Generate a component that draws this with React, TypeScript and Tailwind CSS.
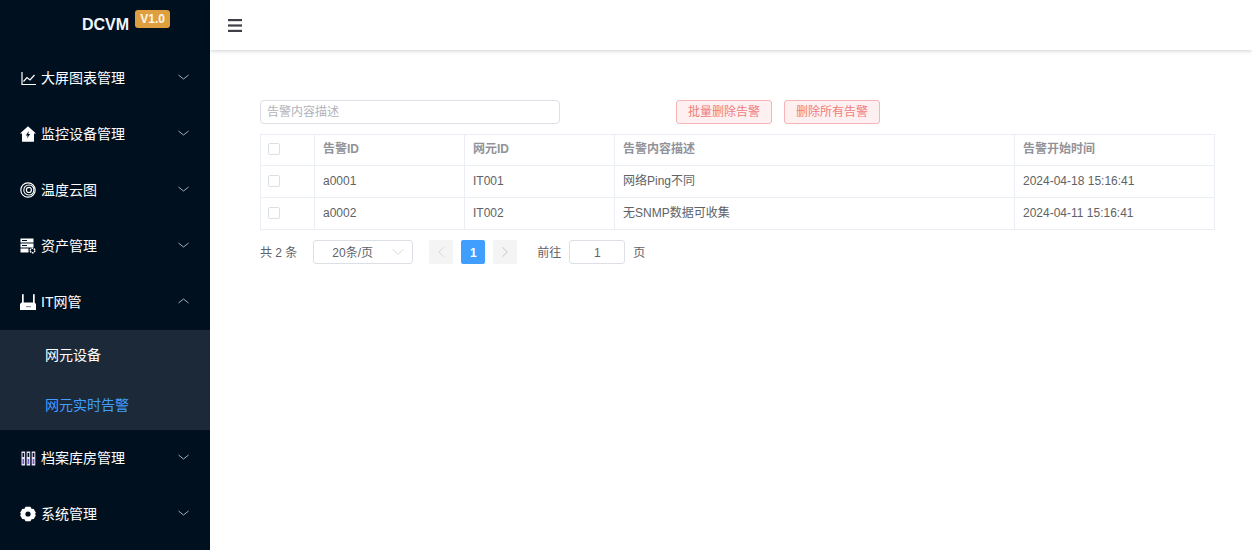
import { ChevronDown, ChevronLeft, ChevronRight } from "lucide-react";
import type { ReactNode } from "react";

const FONT = "font-['Liberation_Sans','Noto_Sans_CJK_SC',sans-serif]";

const ChartIcon = () => (
  <svg width="15" height="15" viewBox="0 0 15 15" fill="none" stroke="#fff" strokeWidth="1.2">
    <path d="M1 1v12.5h14" />
    <path d="M2.5 10.5 6 6.5l3 2.5 4.5-5" />
  </svg>
);

const HomeIcon = () => (
  <svg width="16" height="16" viewBox="0 0 16 16">
    <path d="M8 0.2 16 7.5h-2V15.8H2V7.5H0Z" fill="#fff" />
    <path d="M8.8 5 5.8 9.5h1.9L7 12.5l3.2-4.4H8.3Z" fill="#001020" />
  </svg>
);

const CloudIcon = () => (
  <svg width="16" height="16" viewBox="0 0 16 16" fill="none" stroke="#fff">
    <circle cx="8" cy="8" r="7.2" strokeWidth="1.2" />
    <path d="M3.8 8.2c0-3 2.2-5.2 5.2-5.2 3.2 0 5 2.2 4.8 5.2-.2 2.7-2.1 4.8-5 4.8-2.9 0-5-1.9-5-4.8Z" strokeWidth="1.1" />
    <path d="M6.4 8c0-1.6 1.1-2.6 2.6-2.6s2.5 1.1 2.4 2.7c-.1 1.4-1.1 2.4-2.4 2.4-1.5 0-2.6-1.1-2.6-2.5Z" strokeWidth="1.2" />
  </svg>
);

const AssetIcon = () => (
  <svg width="16" height="16" viewBox="0 0 16 16">
    <rect x="0.5" y="0.5" width="13" height="4" fill="#fff" />
    <rect x="0.5" y="5.5" width="13" height="4" fill="#fff" />
    <rect x="0.5" y="10.5" width="8" height="4" fill="#fff" />
    <rect x="2" y="2" width="5" height="1" fill="#001020" />
    <rect x="2" y="7" width="5" height="1" fill="#001020" />
    <circle cx="12.5" cy="12.5" r="2.3" fill="none" stroke="#fff" strokeWidth="1.4" strokeDasharray="1.6 0.6" />
  </svg>
);

const RouterIcon = () => (
  <svg width="16" height="16" viewBox="0 0 16 16">
    <rect x="2" y="0.2" width="1.7" height="9" fill="#fff" />
    <rect x="13" y="0.2" width="1.7" height="9" fill="#fff" />
    <path d="M1.5 8.5h13L16 10v6H0v-6Z" fill="#fff" />
    <rect x="6" y="12" width="5" height="1.2" fill="#8a94a0" />
  </svg>
);

const ArchiveIcon = () => (
  <svg width="15" height="15" viewBox="0 0 15 15">
    <rect x="0.5" y="0.5" width="3.6" height="14" fill="#e6e0f5" />
    <rect x="5.6" y="0.5" width="3.6" height="14" fill="#e6e0f5" />
    <rect x="10.7" y="0.5" width="3.6" height="14" fill="#e6e0f5" />
    <rect x="1.5" y="2" width="1.6" height="4" fill="#001020" />
    <rect x="6.6" y="2" width="1.6" height="4" fill="#001020" />
    <rect x="11.7" y="2" width="1.6" height="4" fill="#001020" />
    <rect x="1.5" y="8" width="1.6" height="5" fill="#7458c0" />
    <rect x="6.6" y="8" width="1.6" height="5" fill="#7458c0" />
    <rect x="11.7" y="8" width="1.6" height="5" fill="#7458c0" />
  </svg>
);

const GearIcon = () => (
  <svg width="16" height="16" viewBox="0 0 16 16">
    <path
      fillRule="evenodd"
      fill="#fff"
      d="M5.5 0.8h5l1 2 2.3 0.1 2.2 4-1.3 1.1 1.3 1.1-2.2 4-2.3 0.1-1 2h-5l-1-2-2.3-0.1-2.2-4 1.3-1.1-1.3-1.1 2.2-4 2.3-0.1ZM8 5.4a2.6 2.6 0 1 0 0 5.2 2.6 2.6 0 0 0 0-5.2Z"
    />
  </svg>
);

function MenuItem({ icon, label, open }: { icon: ReactNode; label: string; open?: boolean }) {
  return (
    <div className="flex h-14 items-center pr-[21px] pl-5 text-sm text-white">
      <span className="flex w-[16px] justify-center">{icon}</span>
      <span className="ml-[5px] flex-1">{label}</span>
      <svg width="11" height="6" viewBox="0 0 11 6" fill="none" stroke="#b8bec6" strokeWidth="0.9" className="mb-[2px]">
        <path d={open ? "M0.5 5 5.5 1l5 4" : "M0.5 1l5 4 5-4"} />
      </svg>
    </div>
  );
}

function Checkbox() {
  return <span className="ml-[7px] block h-3 w-3 rounded-[2px] border border-[#dcdfe6] bg-white" />;
}

const rows = [
  { id: "a0001", ne: "IT001", desc: "网络Ping不同", time: "2024-04-18 15:16:41" },
  { id: "a0002", ne: "IT002", desc: "无SNMP数据可收集", time: "2024-04-11 15:16:41" },
];

export default function App() {
  return (
    <div className={`flex h-[550px] w-[1252px] overflow-hidden bg-white ${FONT}`}>
      <aside className="w-[210px] shrink-0 bg-[#00101f]">
        <div className="flex h-[50px] items-start pl-[82px]">
          <span className="mt-[15px] text-base leading-[19px] font-bold text-[#f2f6fa]">DCVM</span>
          <span className="mt-[10px] ml-[6px] flex h-[18px] w-[35px] items-center justify-center rounded-[3px] bg-[#e09f3e] text-xs font-bold text-[#fdf6e8]">
            V1.0
          </span>
        </div>
        <MenuItem icon={<ChartIcon />} label="大屏图表管理" />
        <MenuItem icon={<HomeIcon />} label="监控设备管理" />
        <MenuItem icon={<CloudIcon />} label="温度云图" />
        <MenuItem icon={<AssetIcon />} label="资产管理" />
        <MenuItem icon={<RouterIcon />} label="IT网管" open />
        <div className="bg-[#1c2938] text-sm">
          <div className="flex h-[50px] items-center pl-[45px] text-white">网元设备</div>
          <div className="flex h-[50px] items-center pl-[45px] text-[#409eff]">网元实时告警</div>
        </div>
        <MenuItem icon={<ArchiveIcon />} label="档案库房管理" />
        <MenuItem icon={<GearIcon />} label="系统管理" />
      </aside>

      <div className="flex-1">
        <header className="flex h-[50px] items-center pl-[18px] shadow-[0_1px_4px_rgba(0,21,41,0.2)]">
          <svg width="14" height="13" viewBox="0 0 14 13" fill="#3f3f46">
            <rect y="0" width="14" height="2.2" />
            <rect y="5.4" width="14" height="2.2" />
            <rect y="10.8" width="14" height="2.2" />
          </svg>
        </header>

        <main className="pt-[50px] pl-[50px]">
          <div className="flex items-center">
            <div className="flex h-6 w-[300px] items-center rounded-[4px] border border-[#dcdfe6] pl-[6px] text-xs text-[#b0b3ba]">
              告警内容描述
            </div>
            <button className="ml-[116px] h-6 w-24 rounded-[3px] border border-[#f5b5b5] bg-[#fef0f0] text-xs text-[#f07c7c]">
              批量删除告警
            </button>
            <button className="ml-3 h-6 w-24 rounded-[3px] border border-[#f5b5b5] bg-[#fef0f0] text-xs text-[#f07c7c]">
              删除所有告警
            </button>
          </div>

          <table className="mt-[10px] w-[955px] table-fixed border-collapse text-xs text-[#606266]">
            <colgroup>
              <col className="w-[54px]" />
              <col className="w-[150px]" />
              <col className="w-[150px]" />
              <col className="w-[400px]" />
              <col />
            </colgroup>
            <thead>
              <tr className="h-[31px] text-left text-[#909399]">
                <th className="border border-[#ebeef5] pb-[2px] font-normal"><Checkbox /></th>
                <th className="border border-[#ebeef5] pb-[2px] pl-2 font-bold">告警ID</th>
                <th className="border border-[#ebeef5] pb-[2px] pl-2 font-bold">网元ID</th>
                <th className="border border-[#ebeef5] pb-[2px] pl-2 font-bold">告警内容描述</th>
                <th className="border border-[#ebeef5] pb-[2px] pl-2 font-bold">告警开始时间</th>
              </tr>
            </thead>
            <tbody>
              {rows.map((row) => (
                <tr key={row.id} className="h-8">
                  <td className="border border-[#ebeef5] pb-[2px]"><Checkbox /></td>
                  <td className="border border-[#ebeef5] pb-[2px] pl-2">{row.id}</td>
                  <td className="border border-[#ebeef5] pb-[2px] pl-2">{row.ne}</td>
                  <td className="border border-[#ebeef5] pb-[2px] pl-2">{row.desc}</td>
                  <td className="border border-[#ebeef5] pb-[2px] pl-2">{row.time}</td>
                </tr>
              ))}
            </tbody>
          </table>

          <div className="mt-[10px] flex h-6 items-center text-xs text-[#606266]">
            <span className="pt-[2px]">共 2 条</span>
            <div className="ml-4 flex h-6 w-[100px] items-center rounded-[3px] border border-[#dcdfe6] pr-1 pl-[18px]">
              <span className="flex-1 pt-[2px]">20条/页</span>
              <ChevronDown size={20} strokeWidth={0.7} className="text-[#b8bcc4]" />
            </div>
            <div className="ml-4 flex h-6 w-6 items-center justify-center rounded-[2px] bg-[#f4f4f5] text-[#c0c4cc]">
              <ChevronLeft size={18} strokeWidth={0.8} />
            </div>
            <div className="ml-2 flex h-6 w-6 items-center justify-center rounded-[2px] bg-[#409eff] pt-[2px] font-bold text-white">
              1
            </div>
            <div className="ml-2 flex h-6 w-6 items-center justify-center rounded-[2px] bg-[#f4f4f5] text-[#a0a4ac]">
              <ChevronRight size={18} strokeWidth={0.8} />
            </div>
            <span className="ml-5 pt-[2px]">前往</span>
            <div className="ml-2 flex h-6 w-14 items-center justify-center rounded-[3px] border border-[#dcdfe6] pt-[2px]">1</div>
            <span className="ml-2 pt-[2px]">页</span>
          </div>
        </main>
      </div>
    </div>
  );
}
